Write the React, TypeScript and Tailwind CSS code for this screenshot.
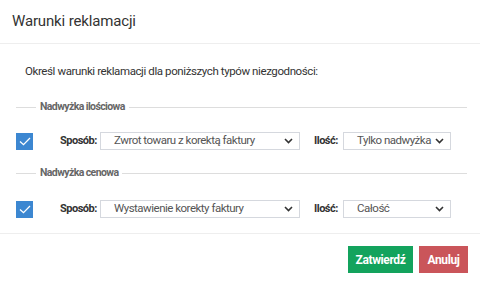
const ROWS = [
  { legend: "Nadwyżka ilościowa", sposob: "Zwrot towaru z korektą faktury", ilosc: "Tylko nadwyżka" },
  { legend: "Nadwyżka cenowa", sposob: "Wystawienie korekty faktury", ilosc: "Całość" },
];

function Chevron() {
  return (
    <svg width="9" height="6" viewBox="0 0 9 6" className="shrink-0">
      <path d="M1 1l3.5 3.5L8 1" fill="none" stroke="#333" strokeWidth="1.6" />
    </svg>
  );
}

function FakeSelect({ value, width }: { value: string; width: string }) {
  return (
    <div
      className={`flex h-[18px] items-center justify-between border border-[#d5d8de] bg-white pl-[13px] pr-[6px] text-[11.5px] tracking-[-0.5px] text-[#555] ${width}`}
    >
      <span className="whitespace-nowrap leading-none">{value}</span>
      <Chevron />
    </div>
  );
}

function Checkbox() {
  return (
    <div className="flex h-[17px] w-[17px] items-center justify-center bg-[#3c87d1]">
      <svg width="12" height="9" viewBox="0 0 12 9">
        <path d="M1 4.5l3.5 3.2L11 1" fill="none" stroke="#fff" strokeWidth="1.3" />
      </svg>
    </div>
  );
}

function App() {
  return (
    <main className="h-[284px] w-[480px] bg-white font-['Roboto',sans-serif] text-[#333]">
      <header className="flex h-[44px] items-center border-b border-[#eee] px-3">
        <h1 className="text-[15px] font-normal tracking-[-0.15px] text-[#333]">Warunki reklamacji</h1>
      </header>

      <section className="pb-[15px] pt-[18px]">
        <p className="h-[18px] pl-[25px] text-[11.5px] leading-[18px] tracking-[-0.4px] text-[#333]">
          Określ warunki reklamacji dla poniższych typów niezgodności:
        </p>

        {ROWS.map((row, i) => (
          <div key={row.legend} className={i === 0 ? "mt-[20px]" : "mt-[16px]"}>
            <div className="ml-4 mr-[13px] flex h-[14px] items-center gap-[4px]">
              <div className="h-px w-[20px] bg-[#ddd]" />
              <span className="text-[10.5px] font-bold leading-none tracking-[-0.6px] text-[#666]">
                {row.legend}
              </span>
              <div className="h-px flex-1 bg-[#ddd]" />
            </div>
            <div className={`ml-4 flex h-[18px] items-center ${i === 0 ? "mt-[18px]" : "mt-[20px]"}`}>
              <Checkbox />
              <span className="ml-[27px] w-[40px] text-[11px] font-bold tracking-[-0.5px] text-[#333]">
                Sposób:
              </span>
              <FakeSelect value={row.sposob} width="w-[200px]" />
              <span className="ml-[14px] w-[29px] text-[11px] font-bold tracking-[-0.5px] text-[#333]">
                Ilość:
              </span>
              <FakeSelect value={row.ilosc} width="w-[108px]" />
            </div>
          </div>
        ))}
      </section>

      <footer className="flex justify-end gap-[6px] border-t border-[#eee] pr-[12px] pt-[12px]">
        <button
          type="button"
          className="h-[27px] w-[65px] bg-[#13a35d] text-[12px] font-bold tracking-[-0.4px] text-white"
        >
          Zatwierdź
        </button>
        <button
          type="button"
          className="h-[27px] w-[49px] bg-[#ca555a] text-[12px] font-bold tracking-[-0.4px] text-white"
        >
          Anuluj
        </button>
      </footer>
    </main>
  );
}

export default App;
